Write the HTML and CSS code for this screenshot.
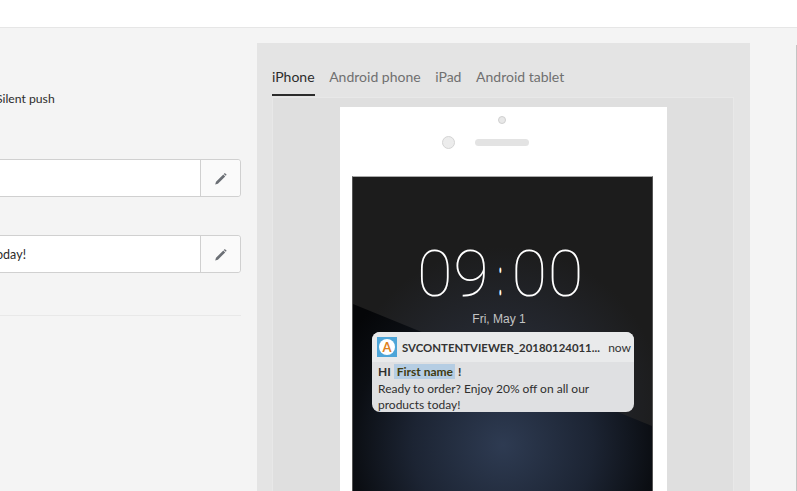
FILE: index.html
```html
<!DOCTYPE html>
<html lang="en">
<head>
    <meta charset="UTF-8">
    <title>Push notification</title>
    <link rel="stylesheet" href="styles.css">
</head>
<body>
    <div class="topbar"></div>
    <div class="content">
        <div class="form">
            <div class="push-type">Silent push</div>
            <div class="field">
                <div class="field-text"></div>
                <button class="field-btn"><svg width="13" height="13" viewBox="0 0 13 13"><path d="M10.8 .9l1.9 1.9-1 1-1.9-1.9zM9.3 2.5l1.9 1.9-7.3 7.3-2.7 .8 .8-2.7z" fill="#6b6f75"/></svg></button>
            </div>
            <div class="field field-second">
                <div class="field-text">Ready to order? Enjoy 20% off on all our products today!</div>
                <button class="field-btn"><svg width="13" height="13" viewBox="0 0 13 13"><path d="M10.8 .9l1.9 1.9-1 1-1.9-1.9zM9.3 2.5l1.9 1.9-7.3 7.3-2.7 .8 .8-2.7z" fill="#6b6f75"/></svg></button>
            </div>
            <div class="divider"></div>
        </div>
        <div class="preview">
            <div class="tabs">
                <div class="tab active">iPhone</div>
                <div class="tab">Android phone</div>
                <div class="tab">iPad</div>
                <div class="tab">Android tablet</div>
            </div>
            <div class="stage">
                <div class="phone">
                    <div class="phone-top">
                        <div class="camera"></div>
                        <div class="phone-row">
                            <div class="sensor"></div>
                            <div class="speaker"></div>
                        </div>
                    </div>
                    <div class="screen">
                        <div class="clock">09<span class="colon">:</span>00</div>
                        <div class="date">Fri, May 1</div>
                        <div class="notif">
                            <div class="notif-head">
                                <div class="app-icon"><span class="app-letter">A</span></div>
                                <div class="app-name">SVCONTENTVIEWER_20180124011...</div>
                                <div class="notif-time">now</div>
                            </div>
                            <div class="notif-body">
                                <div class="notif-title">HI <span class="token">First name</span> !</div>
                                <div class="notif-msg">Ready to order? Enjoy 20% off on all our products today!</div>
                            </div>
                        </div>
                    </div>
                </div>
            </div>
        </div>
        <div class="scroll-edge"></div>
    </div>
</body>
</html>
```

FILE: styles.css
```css
html, body {
    margin: 0;
    height: 100%;
    overflow: hidden;
}
body {
    font-family: "Lato", "Noto Sans", sans-serif;
    background-color: #f4f4f4;
    color: #2c2c2c;
    display: flex;
    flex-direction: column;
}
.topbar {
    height: 27px;
    flex-shrink: 0;
    background-color: #fff;
    border-bottom: 1px solid #e6e6e6;
}
.content {
    flex: 1;
    display: flex;
    min-height: 0;
}

/* left form, runs off the left side of the window */
.form {
    width: 241px;
    flex-shrink: 0;
    overflow: hidden;
    display: flex;
    flex-direction: column;
    align-items: flex-end;
}
.push-type {
    width: 241px;
    margin-top: 63px;
    font-size: 12.2px;
    line-height: 16px;
    text-indent: -4px;
}
.field {
    width: 600px;
    height: 38px;
    box-sizing: border-box;
    flex-shrink: 0;
    display: flex;
    margin-top: 52px;
    background-color: #fff;
    border: 1px solid #d0d0d0;
    border-radius: 3px;
}
.field-second {
    margin-top: 38px;
}
.field-text {
    flex: 1;
    font-size: 12.5px;
    line-height: 37px;
    text-align: right;
    white-space: nowrap;
    padding-right: 174px;
}
.field-btn {
    width: 40px;
    padding: 0;
    border: none;
    border-left: 1px solid #d0d0d0;
    border-radius: 0 3px 3px 0;
    background-color: #fafafa;
    display: flex;
    align-items: center;
    justify-content: center;
}
.divider {
    width: 241px;
    flex-shrink: 0;
    margin-top: 42px;
    border-top: 1px solid #e8e8e8;
}

/* preview panel */
.preview {
    width: 493px;
    flex-shrink: 0;
    margin: 15px 0 0 16px;
    background-color: #e4e4e4;
    box-sizing: border-box;
    padding: 0 16px 0 15px;
    display: flex;
    flex-direction: column;
}
.tabs {
    display: flex;
    gap: 14.6px;
    margin-top: 22px;
    height: 32px;
    flex-shrink: 0;
}
.tab {
    font-size: 14px;
    line-height: 23px;
    color: #707070;
}
.tab.active {
    color: #2c2c2c;
    height: 29px;
    border-bottom: 2px solid #2c2c2c;
}
.stage {
    flex: 1;
    min-height: 0;
    background-color: #dfdfdf;
    border-top: 1px solid #e8e8e8;
    border-left: 1px solid #e8e8e8;
    border-right: 1px solid #e8e8e8;
    padding: 9px 66px 0 67px;
    display: flex;
    justify-content: center;
}
.phone {
    flex: 1;
    background-color: #fff;
    padding: 0 14px 0 12px;
}
.phone-top {
    height: 69px;
    display: flex;
    flex-direction: column;
    align-items: center;
}
.camera {
    width: 6px;
    height: 6px;
    margin-top: 9px;
    margin-right: 2px;
    border: 1px solid #d0d0d0;
    border-radius: 50%;
    background-color: #e8e8e8;
}
.phone-row {
    display: flex;
    align-items: center;
    gap: 20px;
    margin-top: 12px;
    margin-right: 34px;
}
.sensor {
    width: 11px;
    height: 11px;
    border: 1px solid #d4d4d4;
    border-radius: 50%;
    background-color: #ececec;
}
.speaker {
    width: 54px;
    height: 7px;
    border-radius: 4px;
    background-color: #e3e3e3;
}
.screen {
    height: 330px;
    box-sizing: border-box;
    border-top: 1px solid #aaa;
    border-left: 1px solid #555;
    border-right: 1px solid #555;
    background: radial-gradient(circle at 150px 268px, #2e3b52 0, #1c2433 90px, #0b0e13 150px, #050608 190px);
    position: relative;
    overflow: hidden;
    display: flex;
    flex-direction: column;
    align-items: center;
}
/* the lighter wedge over the blue glow */
.screen::before {
    content: "";
    position: absolute;
    inset: 0;
    clip-path: polygon(0 0, 100% 0, 100% 249px, 0 127px);
    background: radial-gradient(circle at 150px 230px, #2d3340 0, #23262d 90px, #1c1c1c 160px);
}
.clock {
    position: relative;
    font-family: "Roboto", sans-serif;
    font-weight: 100;
    font-size: 65px;
    line-height: 76px;
    letter-spacing: .6px;
    margin-top: 59px;
    margin-right: 4px;
    color: #fff;
    display: flex;
    align-items: center;
}
.colon {
    display: block;
    font-size: 15px;
    font-weight: 400;
    line-height: 15px;
    margin: 0 9px;
    transform: translateY(5px) scaleY(3.5);
}
.date {
    position: relative;
    font-family: "Liberation Sans", sans-serif;
    font-size: 12px;
    line-height: 16px;
    margin-right: 7px;
    margin-top: -1px;
    color: #c4c4c4;
}
.notif {
    position: absolute;
    left: 19px;
    top: 155px;
    width: 262px;
    height: 80px;
    border-radius: 8px;
    overflow: hidden;
    background-color: #dfe0e2;
}
.notif-head {
    height: 30px;
    background-color: #e9eaeb;
    display: flex;
    align-items: center;
    padding: 0 3px 0 5px;
}
.app-icon {
    width: 20px;
    height: 20px;
    flex-shrink: 0;
    background-color: #4ea5d8;
    display: flex;
    align-items: center;
    justify-content: center;
}
.app-letter {
    width: 16px;
    height: 16px;
    border-radius: 50%;
    background-color: #fff;
    color: #e0811c;
    font-size: 13px;
    font-weight: 700;
    line-height: 16px;
    text-align: center;
}
.app-name {
    flex: 1;
    margin-left: 5px;
    font-size: 11.4px;
    font-weight: 700;
    white-space: nowrap;
    color: #333;
}
.notif-time {
    font-size: 12px;
    color: #333;
}
.notif-body {
    padding: 1px 6px 0;
    font-size: 12px;
    line-height: 16px;
    color: #2f2f2f;
}
.notif-title {
    font-weight: 700;
    line-height: 18px;
}
.token {
    background-color: #b5cde3;
    color: #3f3a10;
    padding: 0 2px 0 3px;
}
.scroll-edge {
    width: 1px;
    margin: 17px 0 0 auto;
    background-color: #c4c4c4;
}
```
